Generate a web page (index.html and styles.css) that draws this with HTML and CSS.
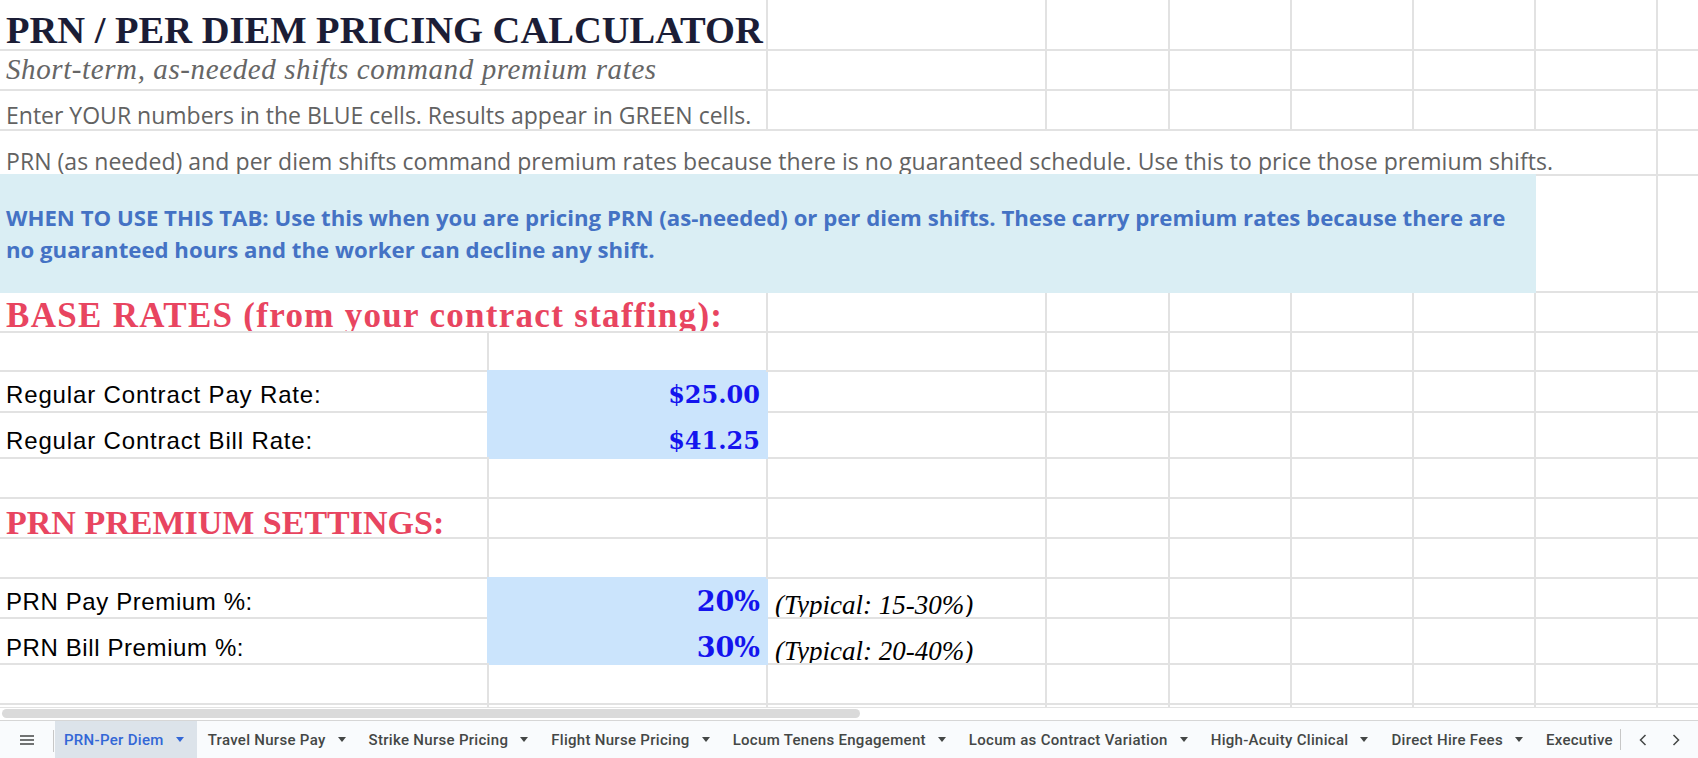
FILE: index.html
```html
<!DOCTYPE html>
<html lang="en">
<head>
  <meta charset="UTF-8">
  <title>PRN / Per Diem Pricing Calculator</title>
  <link rel="stylesheet" href="styles.css">
</head>
<body>
  <div class="sheet">
    <!-- 1 -->
    <div class="c span2 title">PRN / PER DIEM PRICING CALCULATOR</div>
    <div class="c"></div><div class="c"></div><div class="c"></div><div class="c"></div><div class="c"></div><div class="c"></div><div class="c"></div>
    <!-- 2 -->
    <div class="c span2 subtitle">Short-term, as-needed shifts command premium rates</div>
    <div class="c"></div><div class="c"></div><div class="c"></div><div class="c"></div><div class="c"></div><div class="c"></div><div class="c"></div>
    <!-- 3 -->
    <div class="c span2 note note-top">Enter YOUR numbers in the BLUE cells. Results appear in GREEN cells.</div>
    <div class="c"></div><div class="c"></div><div class="c"></div><div class="c"></div><div class="c"></div><div class="c"></div><div class="c"></div>
    <!-- 4 -->
    <div class="c span8 note note-long">PRN (as needed) and per diem shifts command premium rates because there is no guaranteed schedule. Use this to price those premium shifts.</div>
    <div class="c"></div>
    <!-- 5 -->
    <div class="c span7 band">WHEN TO USE THIS TAB: Use this when you are pricing PRN (as-needed) or per diem shifts. These carry premium rates because there are<br>no guaranteed hours and the worker can decline any shift.</div>
    <div class="c"></div><div class="c"></div>
    <!-- 6 -->
    <div class="c span2 head head-base">BASE RATES (from your contract staffing):</div>
    <div class="c"></div><div class="c"></div><div class="c"></div><div class="c"></div><div class="c"></div><div class="c"></div><div class="c"></div>
    <!-- 7 -->
    <div class="c"></div><div class="c"></div><div class="c"></div><div class="c"></div><div class="c"></div><div class="c"></div><div class="c"></div><div class="c"></div><div class="c"></div>
    <!-- 8 -->
    <div class="c label">Regular Contract Pay Rate:</div>
    <div class="c input money">$25.00</div>
    <div class="c"></div><div class="c"></div><div class="c"></div><div class="c"></div><div class="c"></div><div class="c"></div><div class="c"></div>
    <!-- 9 -->
    <div class="c label">Regular Contract Bill Rate:</div>
    <div class="c input money">$41.25</div>
    <div class="c"></div><div class="c"></div><div class="c"></div><div class="c"></div><div class="c"></div><div class="c"></div><div class="c"></div>
    <!-- 10 -->
    <div class="c"></div><div class="c"></div><div class="c"></div><div class="c"></div><div class="c"></div><div class="c"></div><div class="c"></div><div class="c"></div><div class="c"></div>
    <!-- 11 -->
    <div class="c head head-prn">PRN PREMIUM SETTINGS:</div>
    <div class="c"></div><div class="c"></div><div class="c"></div><div class="c"></div><div class="c"></div><div class="c"></div><div class="c"></div><div class="c"></div>
    <!-- 12 -->
    <div class="c"></div><div class="c"></div><div class="c"></div><div class="c"></div><div class="c"></div><div class="c"></div><div class="c"></div><div class="c"></div><div class="c"></div>
    <!-- 13 -->
    <div class="c label label-prn">PRN Pay Premium %:</div>
    <div class="c input pct">20%</div>
    <div class="c hint">(Typical: 15-30%)</div>
    <div class="c"></div><div class="c"></div><div class="c"></div><div class="c"></div><div class="c"></div><div class="c"></div>
    <!-- 14 -->
    <div class="c label label-prn">PRN Bill Premium %:</div>
    <div class="c input pct">30%</div>
    <div class="c hint">(Typical: 20-40%)</div>
    <div class="c"></div><div class="c"></div><div class="c"></div><div class="c"></div><div class="c"></div><div class="c"></div>
    <!-- 15 -->
    <div class="c"></div><div class="c"></div><div class="c"></div><div class="c"></div><div class="c"></div><div class="c"></div><div class="c"></div><div class="c"></div><div class="c"></div>
    <!-- 16 -->
    <div class="c"></div><div class="c"></div><div class="c"></div><div class="c"></div><div class="c"></div><div class="c"></div><div class="c"></div><div class="c"></div><div class="c"></div>
  </div>

  <div class="hscroll"><div class="thumb"></div></div>

  <div class="tabbar">
    <div class="menu">
      <svg width="14" height="10" viewBox="0 0 14 10"><path d="M0 1h14M0 5h14M0 9h14" stroke="#444746" stroke-width="1.6"/></svg>
    </div>
    <div class="tabs">
      <div class="tab active">PRN-Per Diem <svg class="caret" width="8" height="5" viewBox="0 0 8 5"><path d="M0 0h8L4 5z"/></svg></div>
      <div class="tab">Travel Nurse Pay <svg class="caret" width="8" height="5" viewBox="0 0 8 5"><path d="M0 0h8L4 5z"/></svg></div>
      <div class="tab">Strike Nurse Pricing <svg class="caret" width="8" height="5" viewBox="0 0 8 5"><path d="M0 0h8L4 5z"/></svg></div>
      <div class="tab">Flight Nurse Pricing <svg class="caret" width="8" height="5" viewBox="0 0 8 5"><path d="M0 0h8L4 5z"/></svg></div>
      <div class="tab">Locum Tenens Engagement <svg class="caret" width="8" height="5" viewBox="0 0 8 5"><path d="M0 0h8L4 5z"/></svg></div>
      <div class="tab">Locum as Contract Variation <svg class="caret" width="8" height="5" viewBox="0 0 8 5"><path d="M0 0h8L4 5z"/></svg></div>
      <div class="tab">High-Acuity Clinical <svg class="caret" width="8" height="5" viewBox="0 0 8 5"><path d="M0 0h8L4 5z"/></svg></div>
      <div class="tab">Direct Hire Fees <svg class="caret" width="8" height="5" viewBox="0 0 8 5"><path d="M0 0h8L4 5z"/></svg></div>
      <div class="tab">Executive <svg class="caret" width="8" height="5" viewBox="0 0 8 5"><path d="M0 0h8L4 5z"/></svg></div>
    </div>
    <div class="nav">
      <svg width="8" height="12" viewBox="0 0 8 12"><path d="M6.5 1L1.5 6l5 5" fill="none" stroke="#444746" stroke-width="1.5"/></svg>
      <svg width="8" height="12" viewBox="0 0 8 12"><path d="M1.5 1l5 5-5 5" fill="none" stroke="#444746" stroke-width="1.5"/></svg>
    </div>
  </div>
</body>
</html>
```

FILE: styles.css
```css
html, body {
  margin: 0; padding: 0;
  width: 100vw; height: 100vh;
  background: #fff;
  overflow: hidden;
  font-family: 'Open Sans', Arial, sans-serif;
}
.sheet {
  display: grid;
  grid-template-columns: 489px 279px 279px 123px 122px 122px 122px 122px 122px;
  grid-template-rows: 51px 40px 40px 45px 117px 40px 39px 41px 46px 40px 40px 40px 40px 46px 40px 40px;
  height: 707px;
  overflow: hidden;
}
.c {
  box-sizing: border-box;
  border-right: 2px solid #e2e2e2; border-bottom: 2px solid #e2e2e2;
  display: flex; align-items: flex-end;
  padding: 0 6px;
  overflow: hidden; white-space: nowrap; min-width: 0;
}
.span2 { grid-column: span 2; }
.span7 { grid-column: span 7; }
.span8 { grid-column: span 8; }

.title { font: bold 38.5px/1 'Liberation Serif', serif; color: #1b1d36; padding-bottom: 0; overflow: visible; }
.subtitle { font: italic 29px/1 'Liberation Serif', serif; color: #666; letter-spacing: .6px; padding-bottom: 5px; }
.note { font: 23px/1 'Open Sans', sans-serif; color: #626262; }
.note-top { padding-bottom: 2px; }
.note-long { padding-bottom: 1px; letter-spacing: .05px; }

.band {
  background: #daeef4; border-color: #daeef4;
  box-shadow: 0 -2px 0 #daeef4;
  align-items: center; white-space: normal;
  font: bold 22.2px/32px 'Open Sans', sans-serif; color: #4472c4;
}
.head { font: bold 35px/28px 'Liberation Serif', serif; color: #e84560; }
.head-base { letter-spacing: 1.3px; padding-bottom: 1px; }
.head-prn { font-size: 34px; padding-bottom: 0; overflow: visible; }

.label { font: 24px/1 'Liberation Sans', Arial, sans-serif; color: #000; letter-spacing: .85px; padding-bottom: 4px; }
.label-prn { letter-spacing: .6px; padding-bottom: 3px; }
.input {
  background: #cbe4fc; border-color: #cbe4fc;
  box-shadow: -2px -2px 0 #cbe4fc;
  justify-content: flex-end; padding-right: 6px;
  font-family: 'DejaVu Serif', serif; font-weight: bold; color: #1414ee; line-height: 1;
}
.money { font-size: 24px; padding-bottom: 4px; }
.pct { font-size: 27px; padding-bottom: 2px; }
.hint { font: italic 27px/20px 'Liberation Serif', serif; color: #000; padding-left: 7px; padding-bottom: 2px; }

.hscroll {
  height: 13px; box-sizing: border-box;
  border-top: 1px solid #e3e3e3;
  padding: 1px 0 0 2px;
}
.thumb { width: 858px; height: 9px; border-radius: 5px; background: #dadada; }

.tabbar {
  height: 38px; box-sizing: border-box;
  border-top: 1px solid #d6d6d6;
  background: #f9fbfd;
  display: flex; align-items: stretch;
  font-family: Roboto, 'Open Sans', sans-serif;
}
.menu {
  width: 54px; display: flex; align-items: center; justify-content: center;
  position: relative;
}
.menu::after { content: ""; position: absolute; right: 0; top: 9px; width: 1px; height: 22px; background: #c7c7c7; }
.tabs { display: flex; flex: 1; overflow: hidden; min-width: 0; padding-left: 1px; }
.tab {
  display: flex; align-items: center; gap: 12px; flex-shrink: 0;
  padding: 0 12px 0 11px;
  font-size: 15px; font-weight: 500; letter-spacing: .3px; color: #444746; white-space: nowrap;
}
.tab.active { background: #dce3ea; color: #3367d6; padding-left: 9px; padding-right: 13px; }
.caret { fill: #444746; }
.tab.active .caret { fill: #3367d6; }
.nav {
  width: 78px; display: flex; align-items: center; justify-content: space-around;
  border-left: 1px solid #c7c7c7; margin: 8px 0; padding: 0 6px; box-sizing: border-box;
}
```
